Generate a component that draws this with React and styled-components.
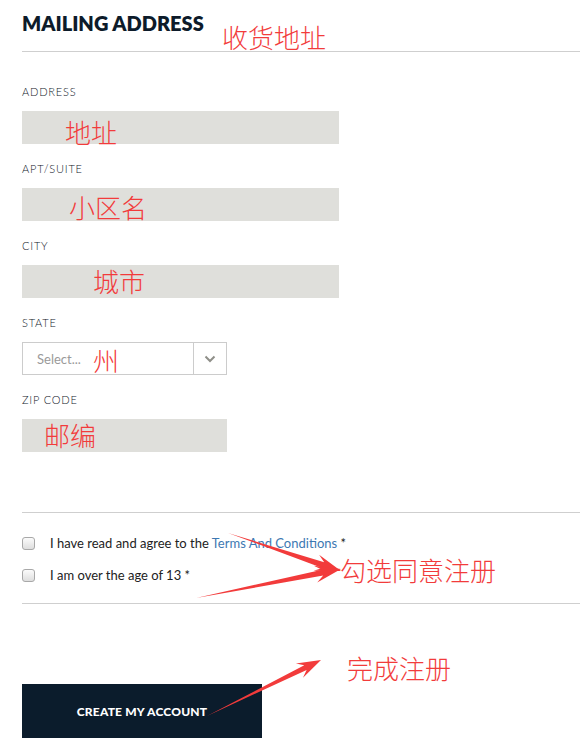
import React from "react";
import styled, { createGlobalStyle } from "styled-components";

const Global = createGlobalStyle`
  html, body { margin: 0; padding: 0; background: #fff; }
  body { font-family: "Lato", "Noto Sans", sans-serif; color: #1b2330; }
  * { box-sizing: border-box; }
`;

const Page = styled.div`
  position: relative;
  width: 580px;
  height: 752px;
  overflow: hidden;
  padding-left: 22px;
`;

const Header = styled.div`
  height: 52px;
  border-bottom: 1px solid #cfcfcf;
  padding-top: 11px;
`;

const Title = styled.h2`
  margin: 0;
  font-family: "Lato", sans-serif;
  font-weight: 800;
  font-size: 20px;
  line-height: 24px;
  letter-spacing: 0;
  color: #0d1b2a;
`;

const Form = styled.div`
  padding-top: 33px;
  display: flex;
  flex-direction: column;
  gap: 18px;
`;

const Field = styled.div`
  position: relative;
  display: flex;
  flex-direction: column;
  gap: 12px;
`;

const Label = styled.div`
  font-size: 11px;
  line-height: 14px;
  font-weight: 300;
  letter-spacing: 0.8px;
  text-transform: uppercase;
  color: #10161f;
`;

const Input = styled.div`
  width: ${(p) => p.$w}px;
  height: 33px;
  background: #dfdfdb;
`;

const Select = styled.div`
  width: 205px;
  height: 33px;
  border: 1px solid #cccccc;
  display: flex;
  align-items: stretch;
`;

const SelectValue = styled.div`
  flex: 1;
  display: flex;
  align-items: center;
  padding-left: 14px;
  font-size: 13px;
  color: #9a9a9a;
`;

const SelectArrow = styled.div`
  width: 33px;
  border-left: 1px solid #cccccc;
  display: flex;
  align-items: center;
  justify-content: center;
`;

const Note = styled.span`
  position: absolute;
  left: ${(p) => p.$x}px;
  top: ${(p) => p.$y}px;
  font-family: "Noto Sans CJK SC", sans-serif;
  font-weight: 300;
  font-size: 26px;
  line-height: 30px;
  color: #f23b3b;
  white-space: nowrap;
  pointer-events: none;
`;

const Terms = styled.div`
  margin-top: 60px;
  border-top: 1px solid #cfcfcf;
  border-bottom: 1px solid #cfcfcf;
  padding: 22px 0 20px;
  display: flex;
  flex-direction: column;
  gap: 16px;
`;

const CheckRow = styled.label`
  display: flex;
  align-items: center;
  gap: 15px;
  font-size: 13px;
  line-height: 16px;
  color: #222;
`;

const Box = styled.span`
  width: 13px;
  height: 13px;
  border: 1px solid #a8a8a8;
  border-radius: 3px;
  background: linear-gradient(#fbfbfb, #dedede);
  flex-shrink: 0;
`;

const Link = styled.span`
  color: #3d78b2;
`;

const Button = styled.button`
  margin-top: 80px;
  width: 240px;
  height: 54px;
  border: none;
  background: #0b1c2c;
  color: #fff;
  font-family: "Lato", sans-serif;
  font-weight: 900;
  font-size: 12px;
  letter-spacing: 0.2px;
  text-transform: uppercase;
  padding: 0;
`;

const Overlay = styled.svg`
  position: absolute;
  left: 0;
  top: 0;
  pointer-events: none;
`;

function arrow(x1, y1, x2, y2, headLen = 26, shaft = 3, headW = 8.5) {
  const dx = x2 - x1;
  const dy = y2 - y1;
  const len = Math.hypot(dx, dy);
  const ux = dx / len;
  const uy = dy / len;
  const nx = -uy;
  const ny = ux;
  const bx = x2 - ux * headLen;
  const by = y2 - uy * headLen;
  const kx = x2 - ux * headLen * 0.72;
  const ky = y2 - uy * headLen * 0.72;
  const pts = [
    [x1, y1],
    [kx + nx * shaft, ky + ny * shaft],
    [bx + nx * headW, by + ny * headW],
    [x2, y2],
    [bx - nx * headW, by - ny * headW],
    [kx - nx * shaft, ky - ny * shaft],
  ];
  return pts.map((p) => p.map((v) => v.toFixed(1)).join(",")).join(" ");
}

const Chevron = () => (
  <svg width="12" height="8" viewBox="0 0 12 8">
    <path d="M1.5 1.5 L6 6 L10.5 1.5" fill="none" stroke="#8f8f89" strokeWidth="2" />
  </svg>
);

export default function App() {
  return (
    <>
      <Global />
      <Page>
        <Header>
          <Title>MAILING ADDRESS</Title>
        </Header>
        <Note $x={222} $y={22}>收货地址</Note>
        <Form>
          <Field>
            <Label>Address</Label>
            <Input $w={317} />
            <Note $x={43} $y={32}>地址</Note>
          </Field>
          <Field>
            <Label>Apt/Suite</Label>
            <Input $w={317} />
            <Note $x={47} $y={30}>小区名</Note>
          </Field>
          <Field>
            <Label>City</Label>
            <Input $w={317} />
            <Note $x={71} $y={27}>城市</Note>
          </Field>
          <Field>
            <Label>State</Label>
            <Select>
              <SelectValue>Select...</SelectValue>
              <SelectArrow>
                <Chevron />
              </SelectArrow>
            </Select>
            <Note $x={71} $y={29}>州</Note>
          </Field>
          <Field>
            <Label>Zip Code</Label>
            <Input $w={205} />
            <Note $x={22} $y={27}>邮编</Note>
          </Field>
        </Form>
        <Terms>
          <CheckRow>
            <Box />
            <span>
              I have read and agree to the <Link>Terms And Conditions</Link> *
            </span>
          </CheckRow>
          <CheckRow>
            <Box />
            <span>I am over the age of 13 *</span>
          </CheckRow>
        </Terms>
        <Button>Create My Account</Button>
        <Note $x={340} $y={555}>勾选同意注册</Note>
        <Note $x={347} $y={653}>完成注册</Note>
        <Overlay width="580" height="752" viewBox="0 0 580 752">
          <polygon points={arrow(228, 533, 341, 571)} fill="#f23b3b" />
          <polygon points={arrow(196, 598, 341, 569)} fill="#f23b3b" />
          <polygon points={arrow(207, 716, 321, 660, 24, 2.6, 8)} fill="#f23b3b" />
        </Overlay>
      </Page>
    </>
  );
}
